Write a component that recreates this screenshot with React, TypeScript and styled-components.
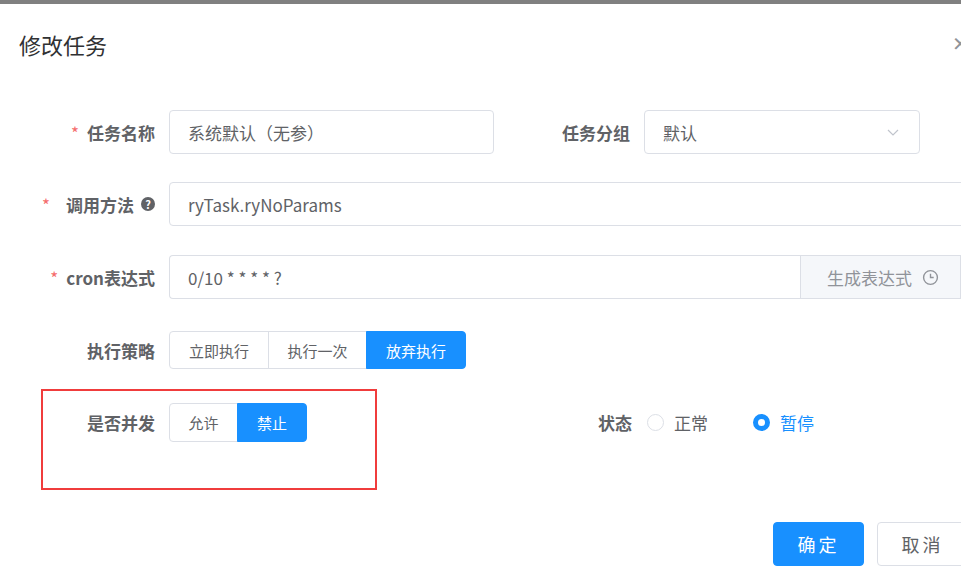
import React from "react";
import styled, { createGlobalStyle } from "styled-components";

const Global = createGlobalStyle`
  html, body { margin: 0; padding: 0; background: #fff; overflow: hidden; }
  body { font-family: "Noto Sans CJK SC", "Liberation Sans", sans-serif; }
`;

const Page = styled.div`
  position: relative;
  width: 961px;
  height: 587px;
  overflow: hidden;
  border-top: 4px solid #808080;
  box-sizing: border-box;
`;

const Header = styled.div`
  display: flex;
  align-items: center;
  justify-content: space-between;
  height: 80px;
  padding: 0 0 0 19px;
`;

const Title = styled.div`
  font-size: 22px;
  color: #303133;
`;

const Close = styled.div`
  font-size: 20px;
  color: #909399;
  margin-right: -8px;
  margin-top: -4px;
`;

const Form = styled.div`
  width: 1100px;
  padding-top: 26px;
  display: flex;
  flex-direction: column;
`;

const Row = styled.div<{ mb: number }>`
  display: flex;
  align-items: center;
  margin-bottom: ${(p) => p.mb}px;
`;

const Label = styled.div<{ w: number }>`
  width: ${(p) => p.w}px;
  box-sizing: border-box;
  padding-right: 14px;
  text-align: right;
  font-size: 17px;
  font-weight: 700;
  color: #606266;
  display: flex;
  justify-content: flex-end;
  align-items: center;
  gap: 4px;
`;

const Star = styled.span<{ gap?: number }>`
  color: #f56c6c;
  margin-right: ${(p) => p.gap ?? 4}px;
  font-weight: 400;
`;

const Help = styled.span`
  display: inline-flex;
  width: 14px;
  height: 14px;
  border-radius: 50%;
  background: #606266;
  color: #fff;
  font-size: 11px;
  align-items: center;
  justify-content: center;
  margin-left: 3px;
`;

const Input = styled.div<{ w: number }>`
  width: ${(p) => p.w}px;
  height: 44px;
  box-sizing: border-box;
  border: 1px solid #dcdfe6;
  border-radius: 4px;
  padding: 0 18px;
  display: flex;
  align-items: center;
  justify-content: space-between;
  font-size: 17px;
  color: #606266;
`;

const Group = styled.div`
  display: flex;
  width: 792px;
  height: 44px;
`;

const GroupInput = styled(Input)`
  border-radius: 4px 0 0 4px;
  border-right: none;
`;

const Append = styled.div`
  flex: 1;
  background: #f5f7fa;
  border: 1px solid #dcdfe6;
  color: #909399;
  font-size: 17px;
  display: flex;
  align-items: center;
  padding-left: 26px;
  gap: 10px;
`;

const Seg = styled.div`
  display: flex;
`;

const SegBtn = styled.div<{ active?: boolean; w: number; h: number }>`
  width: ${(p) => p.w}px;
  height: ${(p) => p.h}px;
  box-sizing: border-box;
  display: flex;
  align-items: center;
  justify-content: center;
  font-size: 15px;
  color: ${(p) => (p.active ? "#fff" : "#606266")};
  background: ${(p) => (p.active ? "#1890ff" : "#fff")};
  border: 1px solid ${(p) => (p.active ? "#1890ff" : "#dcdfe6")};
  margin-left: -1px;
  &:first-child { border-radius: 4px 0 0 4px; margin-left: 0; }
  &:last-child { border-radius: 0 4px 4px 0; }
`;

const Radio = styled.div<{ checked?: boolean }>`
  display: flex;
  align-items: center;
  gap: 10px;
  font-size: 17px;
  color: ${(p) => (p.checked ? "#1890ff" : "#606266")};
  margin-left: 1px;
  margin-right: 44px;
`;

const Dot = styled.span<{ checked?: boolean }>`
  width: 17px;
  height: 17px;
  box-sizing: border-box;
  border-radius: 50%;
  border: ${(p) => (p.checked ? "5px solid #1890ff" : "1px solid #dcdfe6")};
  background: #fff;
`;

const Footer = styled.div`
  display: flex;
  gap: 13px;
  padding-left: 773px;
  margin-top: 80px;
`;

const Btn = styled.div<{ primary?: boolean }>`
  width: 91px;
  height: 44px;
  box-sizing: border-box;
  border-radius: 4px;
  display: flex;
  align-items: center;
  justify-content: center;
  font-size: 18px;
  letter-spacing: 3px;
  color: ${(p) => (p.primary ? "#fff" : "#606266")};
  background: ${(p) => (p.primary ? "#1890ff" : "#fff")};
  border: 1px solid ${(p) => (p.primary ? "#1890ff" : "#dcdfe6")};
`;

const Mark = styled.div`
  position: absolute;
  left: 41px;
  top: 385px;
  width: 336px;
  height: 101px;
  box-sizing: border-box;
  border: 2px solid #f03c3c;
`;

export default function App() {
  return (
    <Page>
      <Global />
      <Header>
        <Title>修改任务</Title>
        <Close>✕</Close>
      </Header>
      <Form>
        <Row mb={28}>
          <Label w={169}><Star>*</Star>任务名称</Label>
          <Input w={325}>系统默认（无参）</Input>
          <Label w={150}>任务分组</Label>
          <Input w={276}>
            默认
            <svg width="16" height="16" viewBox="0 0 16 16"><path d="M3 6l5 5 5-5" fill="none" stroke="#c0c4cc" strokeWidth="1.2" /></svg>
          </Input>
        </Row>
        <Row mb={29}>
          <Label w={169}><Star gap={12}>*</Star>调用方法<Help>?</Help></Label>
          <Input w={820}>ryTask.ryNoParams</Input>
        </Row>
        <Row mb={32}>
          <Label w={169}><Star>*</Star>cron表达式</Label>
          <Group>
            <GroupInput w={631}>0/10 * * * * ?</GroupInput>
            <Append>
              生成表达式
              <svg width="17" height="17" viewBox="0 0 16 16"><circle cx="8" cy="8" r="6.5" fill="none" stroke="#909399" strokeWidth="1.3" /><path d="M8 4.5V8h3" fill="none" stroke="#909399" strokeWidth="1.3" /></svg>
            </Append>
          </Group>
        </Row>
        <Row mb={34}>
          <Label w={169}>执行策略</Label>
          <Seg>
            <SegBtn w={100} h={38}>立即执行</SegBtn>
            <SegBtn w={99} h={38}>执行一次</SegBtn>
            <SegBtn w={100} h={38} active>放弃执行</SegBtn>
          </Seg>
        </Row>
        <Row mb={0}>
          <Label w={169}>是否并发</Label>
          <Seg>
            <SegBtn w={69} h={39}>允许</SegBtn>
            <SegBtn w={70} h={39} active>禁止</SegBtn>
          </Seg>
          <div style={{ width: 186 }} />
          <Label w={153}>状态</Label>
          <Radio><Dot />正常</Radio>
          <Radio checked><Dot checked />暂停</Radio>
        </Row>
        <Footer>
          <Btn primary>确定</Btn>
          <Btn>取消</Btn>
        </Footer>
      </Form>
      <Mark />
    </Page>
  );
}
